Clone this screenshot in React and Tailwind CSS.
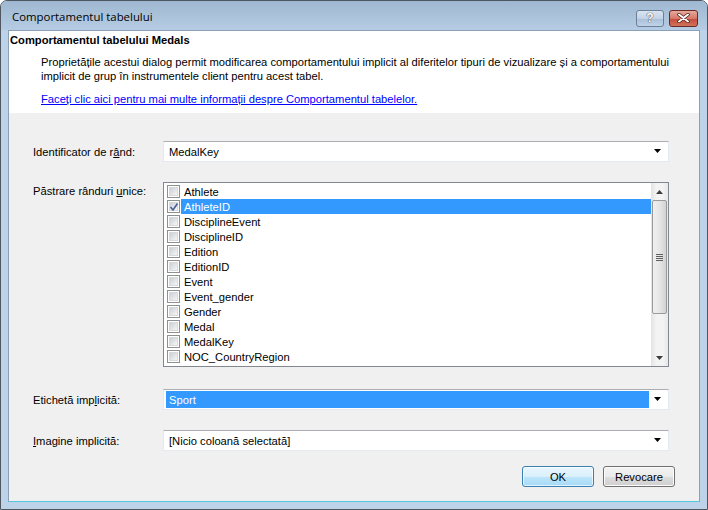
import React from "react";

const items = [
  "Athlete",
  "AthleteID",
  "DisciplineEvent",
  "DisciplineID",
  "Edition",
  "EditionID",
  "Event",
  "Event_gender",
  "Gender",
  "Medal",
  "MedalKey",
  "NOC_CountryRegion",
];

function Arrow() {
  return (
    <svg width="8" height="5" viewBox="0 0 8 5" className="shrink-0">
      <path d="M0 0H7L3.5 4Z" fill="#000" />
    </svg>
  );
}

function Combo({ value, selected }) {
  return (
    <div className="flex h-[21px] flex-1 items-center border border-[#e3e9ef] border-t-[#abadb3] bg-white pl-[2px] pr-[4px]">
      <div
        className={
          "flex h-[17px] flex-1 items-center pl-[3px] " +
          (selected ? "bg-[#3399ff] text-white" : "text-black")
        }
      >
        {value}
      </div>
      <div className="ml-[3px] flex w-[12px] justify-center">
        <Arrow />
      </div>
    </div>
  );
}

function Checkbox({ checked }) {
  return (
    <div className="relative h-[13px] w-[13px] shrink-0 border border-[#8e8f8f] bg-white p-[1px]">
      <div className="h-full w-full border border-[#d9d9d9] bg-gradient-to-br from-[#cbcfd5] to-[#f6f6f6]" />
      {checked && (
        <svg className="absolute left-[1px] top-[1px]" width="10" height="10" viewBox="0 0 10 10">
          <path d="M1.5 5 L4 8 L8.5 1.5" stroke="#4a5f97" strokeWidth="1.6" fill="none" />
        </svg>
      )}
    </div>
  );
}

function Btn({ children, focused }) {
  return (
    <div
      className={
        "flex h-[21px] w-[72px] items-center justify-center rounded-[3px] border text-black " +
        (focused
          ? "border-[#3c7fb1] bg-[linear-gradient(#eaf6fd_0%,#d9f0fc_50%,#bee6fd_51%,#a7d9f5_100%)] shadow-[inset_0_0_0_1px_#ffffffaa]"
          : "border-[#707070] bg-[linear-gradient(#f2f2f2_0%,#ebebeb_50%,#dddddd_51%,#cfcfcf_100%)] shadow-[inset_0_0_0_1px_#fcfcfc]")
      }
    >
      {children}
    </div>
  );
}

export default function App() {
  return (
    <div
      className="flex h-[510px] w-[708px] flex-col overflow-hidden rounded-t-[7px] border border-[#4e5660] bg-[#bdd3ea] text-[11.2px] leading-[14px]"
      style={{ fontFamily: '"Liberation Sans", Arial, sans-serif' }}
    >
      {/* Title bar */}
      <div className="flex h-[29px] shrink-0 items-center bg-[linear-gradient(#9fb7d0,#b5cce4)] pl-[11px] pr-[9px]">
        <div
          className="flex-1 pt-[3px] text-[11.4px] text-black"
          style={{ fontFamily: '"Open Sans", "Noto Sans", sans-serif' }}
        >
          Comportamentul tabelului
        </div>
        <div className="mt-[5px] flex gap-[5px]">
          <div className="flex h-[17px] w-[28px] items-center justify-center rounded-[3px] border border-[#6d7f95] bg-[linear-gradient(#d9e4f1_0%,#c3d3e6_50%,#a9bfd7_51%,#bed3ea_100%)]">
            <span className="text-[12px] font-bold leading-none text-white" style={{ textShadow: "0 0 1px #2b3a4f, 0 0 1px #2b3a4f" }}>?</span>
          </div>
          <div className="flex h-[17px] w-[29px] items-center justify-center rounded-[3px] border border-[#6a2a22] bg-[linear-gradient(#e6a99c_0%,#d5786a_50%,#c14a38_51%,#d2735b_100%)]">
            <svg width="13" height="10" viewBox="0 0 13 10">
              <path d="M2 1.5 L11 8.5 M11 1.5 L2 8.5" stroke="#4a1810" strokeWidth="3.4" strokeLinecap="round" />
              <path d="M2 1.5 L11 8.5 M11 1.5 L2 8.5" stroke="#fff" strokeWidth="2" strokeLinecap="round" />
            </svg>
          </div>
        </div>
      </div>

      {/* Client area */}
      <div className="mx-[7px] mb-[7px] flex flex-1 flex-col border border-[#8a9fb8] border-b-[#54c6dd]">
        {/* Header */}
        <div className="h-[82px] shrink-0 bg-white pl-[1px]">
          <div className="pt-[2px] font-bold text-black">Comportamentul tabelului Medals</div>
          <div className="ml-[31px] mt-[8px] text-black">
            Proprietățile acestui dialog permit modificarea comportamentului implicit al diferitelor tipuri de vizualizare și a comportamentului
            <br />
            implicit de grup în instrumentele client pentru acest tabel.
          </div>
          <div className="ml-[31px] mt-[9px] text-[#0000ff] underline">
            Faceți clic aici pentru mai multe informații despre Comportamentul tabelelor.
          </div>
        </div>

        {/* Body */}
        <div className="flex flex-1 flex-col bg-[#f0f0f0] pl-[24px] pr-[30px] pt-[28px] text-black">
          <div className="flex items-center">
            <div className="w-[130px]">
              Identificator de r<u>â</u>nd:
            </div>
            <Combo value="MedalKey" />
          </div>

          <div className="mt-[20px] flex items-start">
            <div className="w-[130px] pt-[2px]">
              Păstrare rânduri <u>u</u>nice:
            </div>
            <div className="flex h-[185px] flex-1 border border-[#828790] bg-white">
              <div className="flex flex-1 flex-col pt-[1px]">
                {items.map((it, i) => (
                  <div key={it} className="flex h-[15px] items-center pl-[3px]">
                    <Checkbox checked={i === 1} />
                    <div
                      className={
                        "ml-[1px] flex h-[15px] flex-1 items-center pl-[3px] " +
                        (i === 1 ? "bg-[#3399ff] text-white" : "")
                      }
                    >
                      {it}
                    </div>
                  </div>
                ))}
              </div>
              {/* Scrollbar */}
              <div className="flex w-[17px] flex-col bg-[linear-gradient(90deg,#e3e3e3,#f3f3f3_30%,#f3f3f3_70%,#e8e8e8)]">
                <div className="flex h-[17px] items-center justify-center">
                  <svg width="7" height="4" viewBox="0 0 7 4">
                    <path d="M0 4H7L3.5 0Z" fill="#3c3c3c" />
                  </svg>
                </div>
                <div className="mx-[1px] flex h-[114px] items-center justify-center rounded-[2px] border border-[#9a9a9a] bg-[linear-gradient(90deg,#f0f0f0,#e6e6e6_50%,#d3d3d3)]">
                  <div className="flex flex-col gap-[1px]">
                    <div className="h-[1px] w-[7px] bg-[#5f5f5f]" />
                    <div className="h-[1px] w-[7px] bg-[#5f5f5f]" />
                    <div className="h-[1px] w-[7px] bg-[#5f5f5f]" />
                    <div className="h-[1px] w-[7px] bg-[#5f5f5f]" />
                  </div>
                </div>
                <div className="flex-1" />
                <div className="flex h-[17px] items-center justify-center">
                  <svg width="7" height="4" viewBox="0 0 7 4">
                    <path d="M0 0H7L3.5 4Z" fill="#3c3c3c" />
                  </svg>
                </div>
              </div>
            </div>
          </div>

          <div className="mt-[22px] flex items-center">
            <div className="w-[130px]">
              Etichetă imp<u>l</u>icită:
            </div>
            <Combo value="Sport" selected />
          </div>

          <div className="mt-[20px] flex items-center">
            <div className="w-[130px]">
              <u>I</u>magine implicită:
            </div>
            <Combo value="[Nicio coloană selectată]" />
          </div>

          <div className="-mr-[6px] mt-[15px] flex justify-end gap-[9px]">
            <Btn focused>OK</Btn>
            <Btn>Revocare</Btn>
          </div>
        </div>
      </div>
    </div>
  );
}
